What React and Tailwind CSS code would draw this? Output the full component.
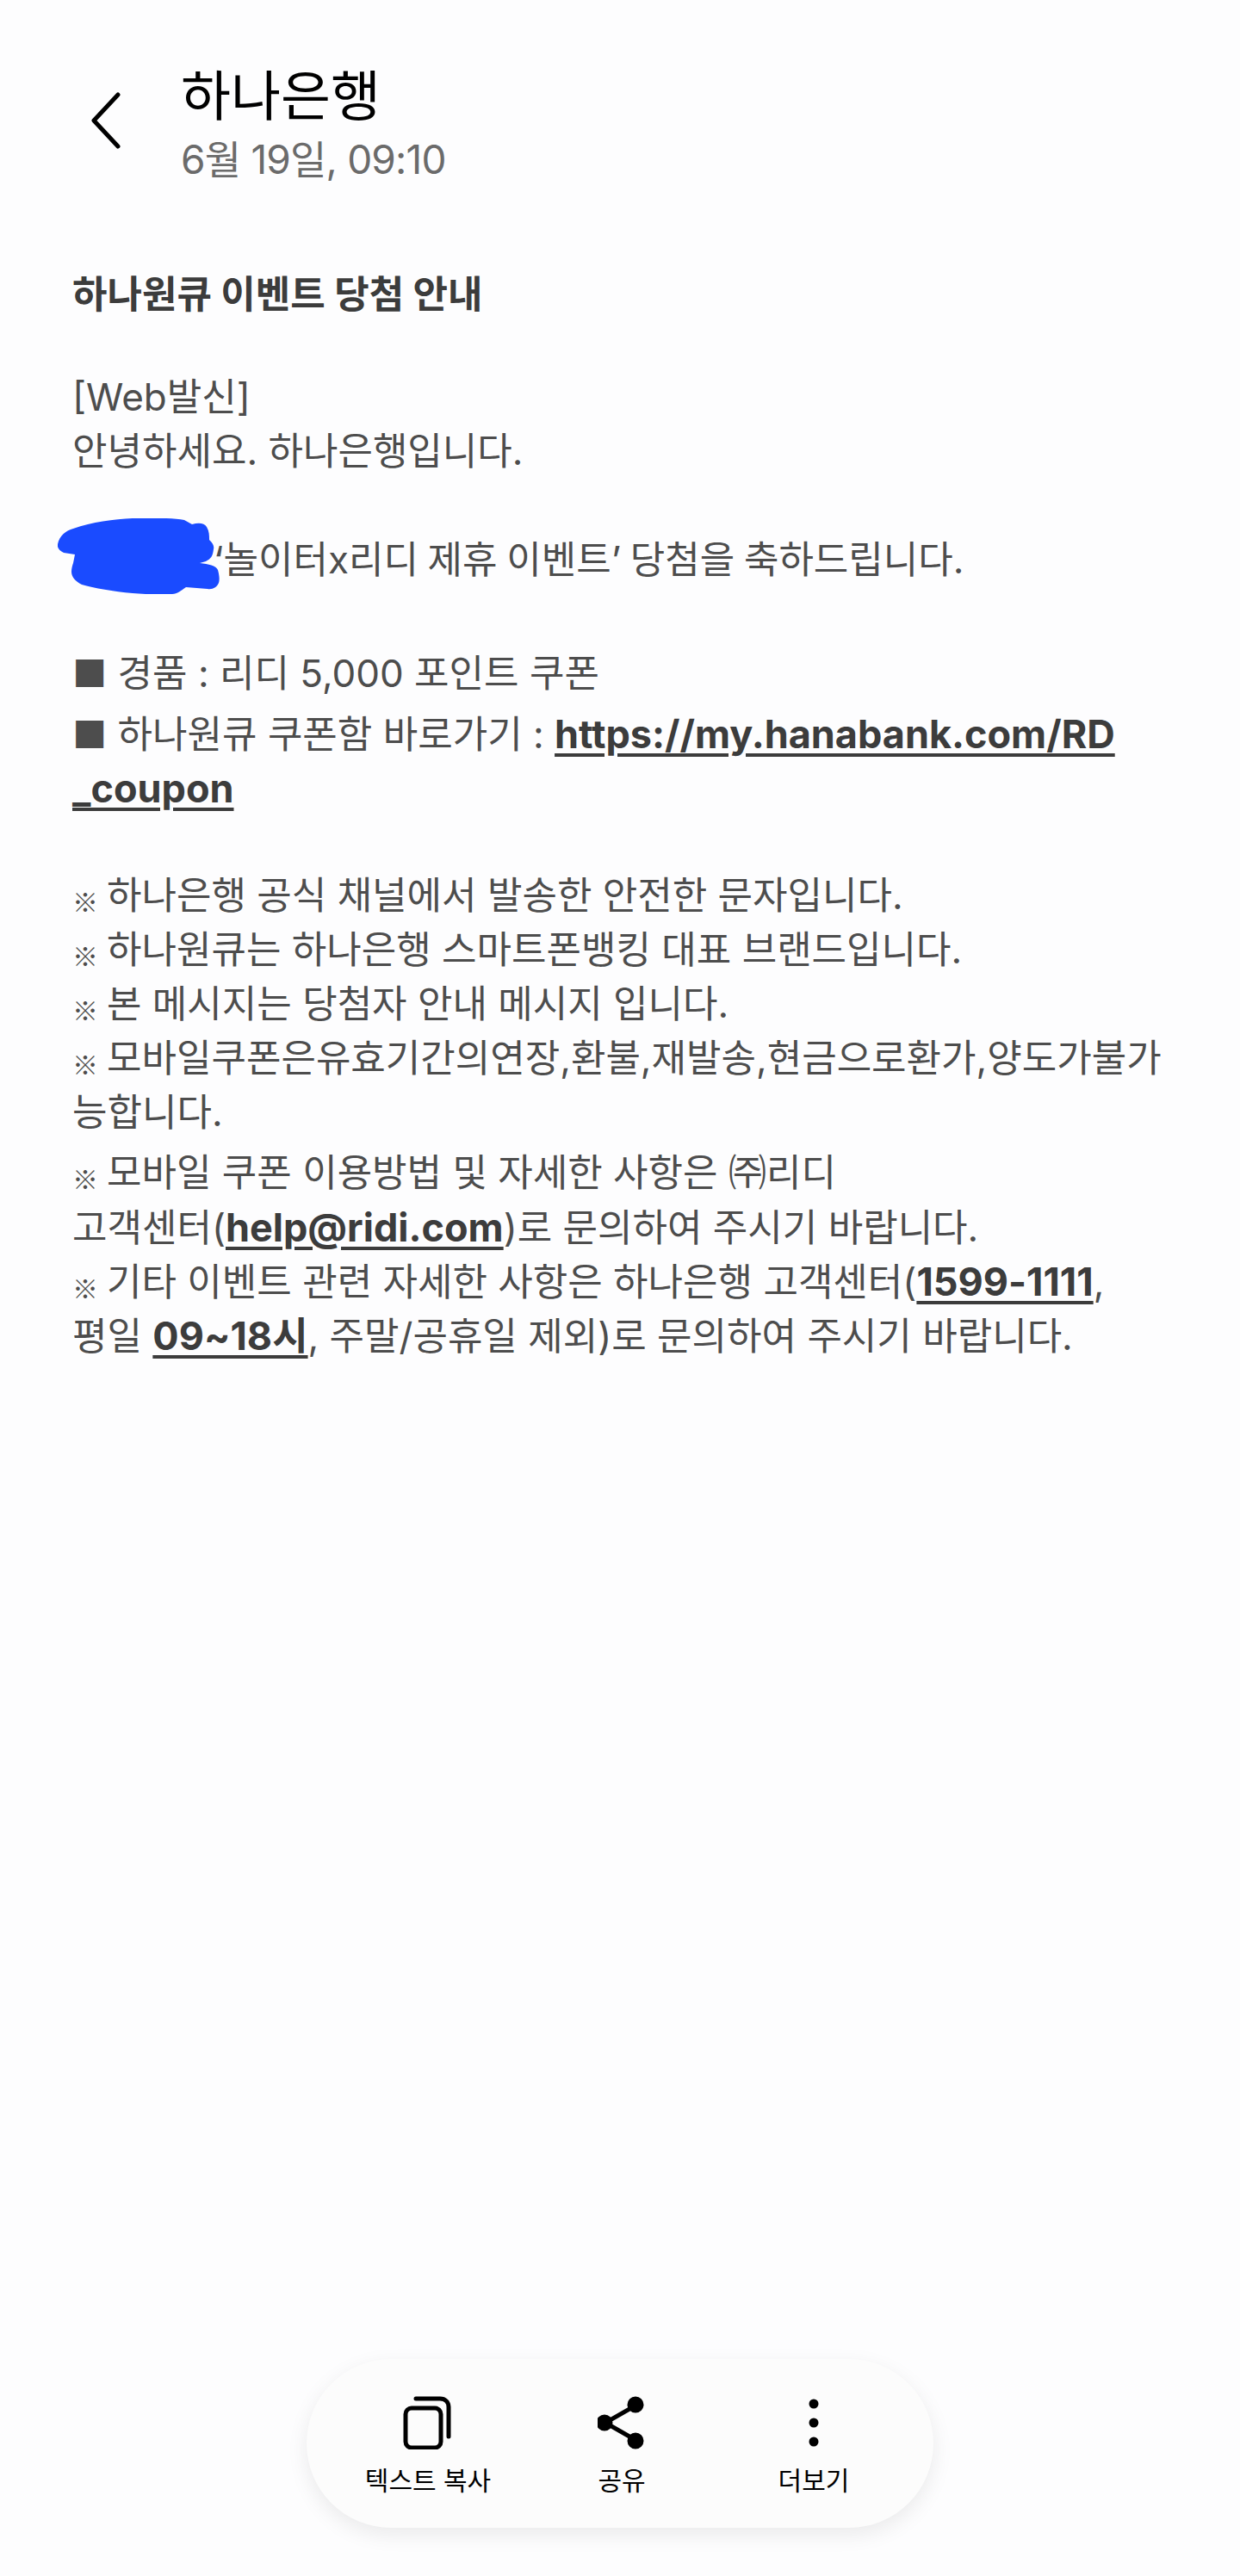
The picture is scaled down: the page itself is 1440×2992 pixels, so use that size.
import React from 'react';

const Line = ({ children, className = '' }) => (
  <p className={`h-[63px] leading-[63px] whitespace-nowrap ${className}`}>{children}</p>
);

const B = ({ children }) => (
  <span className="text-[45px] font-bold text-[#3c3c3c] underline decoration-[4px] underline-offset-[6px]">{children}</span>
);

// the reference mark is much smaller than the body text, Inter's own glyph is too tiny
const Mark = () => (
  <span className="font-['Noto_Sans_CJK_KR'] text-[30px] mr-[10px] align-[-3px]">※</span>
);

const App = () => {
  return (
    <div
      className="h-[2992px] w-[1440px] overflow-hidden bg-[#fdfdfe] flex flex-col"
      style={{ fontFamily: 'Inter, "Noto Sans CJK KR", "Noto Sans", sans-serif' }}
    >
      <header className="flex pt-[73px] pl-[106px]">
        <svg width="34" height="66" viewBox="0 0 34 66" fill="none" className="mt-[34px]">
          <path d="M31 3 L3 33 L31 63" stroke="#000" strokeWidth="5" strokeLinecap="round" strokeLinejoin="round" />
        </svg>
        <div className="ml-[70px]">
          <h1 className="text-[63px] leading-[76px] text-black">하나은행</h1>
          <p className="mt-[7px] text-[46px] leading-[58px] text-[#6b6b6b] tracking-[-0.8px]">6월 19일, 09:10</p>
        </div>
      </header>

      <main className="relative ml-[84px] mt-[97px] text-[44px] text-[#4d4d4d] font-normal">
        <Line className="font-bold text-[#3c3c3c]">하나원큐 이벤트 당첨 안내</Line>
        <div className="h-[56px]" />
        <Line>[Web발신]</Line>
        <Line>안녕하세요. 하나은행입니다.</Line>
        <div className="h-[63px]" />
        <Line className="pl-[164px] [word-spacing:-1.7px]">‘놀이터x리디 제휴 이벤트’ 당첨을 축하드립니다.</Line>
        <svg width="188" height="88" viewBox="0 0 188 88" className="absolute left-[-17px] top-[291px]">
          <path
            d="M0 30 C2 20 10 14 18 12 C40 4 65 1 87 0 C115 -1 135 0 147 2 L156 7 C163 5 170 5 173 10 C176 15 176 20 176 25 C180 29 182 32 181 36 C180 44 178 47 172 50 L165 52 C175 53 184 55 186 60 C188 67 188 72 187 75 C185 80 180 83 174 82 L149 80 C143 84 139 88 133 88 C115 89 100 88 87 87 C65 85 42 81 28 77 C20 73 16 68 16 62 C16 58 17 55 18 52 L20 42 L7 40 C2 38 -1 34 0 30 Z"
            fill="#1a4bff"
          />
        </svg>
        <div className="h-[69px]" />
        <Line>■ 경품 : 리디 5,000 포인트 쿠폰</Line>
        <div className="h-[7px]" />
        <Line>■ 하나원큐 쿠폰함 바로가기 : <B>https://my.hanabank.com/RD</B></Line>
        <Line><B>_coupon</B></Line>
        <div className="h-[62px]" />
        <Line><Mark />하나은행 공식 채널에서 발송한 안전한 문자입니다.</Line>
        <Line><Mark />하나원큐는 하나은행 스마트폰뱅킹 대표 브랜드입니다.</Line>
        <Line><Mark />본 메시지는 당첨자 안내 메시지 입니다.</Line>
        <Line><Mark />모바일쿠폰은유효기간의연장,환불,재발송,현금으로환가,양도가불가</Line>
        <Line>능합니다.</Line>
        <div className="h-[7px]" />
        <Line><Mark />모바일 쿠폰 이용방법 및 자세한 사항은 ㈜리디</Line>
        <Line>고객센터(<B>help@ridi.com</B>)로 문의하여 주시기 바랍니다.</Line>
        <Line><Mark />기타 이벤트 관련 자세한 사항은 하나은행 고객센터(<B>1599-1111</B>,</Line>
        <Line>평일 <B>09~18시</B>, 주말/공휴일 제외)로 문의하여 주시기 바랍니다.</Line>
      </main>

      <div className="mt-auto mb-[56px] mx-auto w-[728px] h-[196px] rounded-[98px] bg-[#fcfcfc] shadow-[0_8px_24px_rgba(0,0,0,0.08)] relative text-[30px] text-black">
        <div className="absolute inset-x-0 top-[43px] flex">
          <div className="w-[282px] flex flex-col items-center">
            <svg width="56" height="62" viewBox="0 0 56 62" fill="none" stroke="#000" strokeWidth="5" strokeLinecap="round" className="-translate-x-[1px]">
              <rect x="3" y="14" width="41" height="46" rx="7" />
              <path d="M15 3 H43 C49 3 53 7 53 13 V47" />
            </svg>
            <span className="mt-[16px] leading-[40px]">텍스트 복사</span>
          </div>
          <div className="w-[168px] flex flex-col items-center">
            <svg width="56" height="62" viewBox="0 0 56 62" fill="#000" stroke="#000" strokeWidth="5">
              <path d="M44 11 L9 31 L44 51" fill="none" />
              <circle cx="44" cy="10" r="7" />
              <circle cx="8" cy="31" r="7" />
              <circle cx="44" cy="52" r="7" />
            </svg>
            <span className="mt-[16px] leading-[40px]">공유</span>
          </div>
          <div className="w-[278px] flex flex-col items-center">
            <svg width="14" height="62" viewBox="0 0 14 62" fill="#000">
              <circle cx="7" cy="9" r="5.5" />
              <circle cx="7" cy="31" r="5.5" />
              <circle cx="7" cy="53" r="5.5" />
            </svg>
            <span className="mt-[16px] leading-[40px]">더보기</span>
          </div>
        </div>
      </div>
    </div>
  );
};

export default App;
